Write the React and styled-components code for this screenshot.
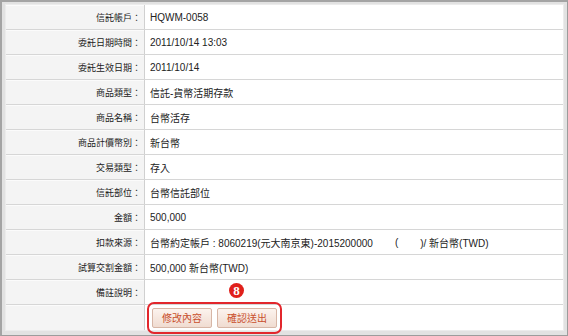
import React from "react";
import styled, { createGlobalStyle } from "styled-components";

const GlobalStyle = createGlobalStyle`
  html, body {
    margin: 0;
    padding: 0;
    background: #ffffff;
  }
  body {
    font-family: "Liberation Sans", Arial, "Noto Sans CJK TC", sans-serif;
  }
`;

const rows = [
  { label: "信託帳戶：", value: "HQWM-0058" },
  { label: "委託日期時間：", value: "2011/10/14 13:03" },
  { label: "委託生效日期：", value: "2011/10/14" },
  { label: "商品類型：", value: "信託-貨幣活期存款" },
  { label: "商品名稱：", value: "台幣活存" },
  { label: "商品計價幣別：", value: "新台幣" },
  { label: "交易類型：", value: "存入" },
  { label: "信託部位：", value: "台幣信託部位" },
  { label: "金額：", value: "500,000" },
  { label: "扣款來源：", value: "source" },
  { label: "試算交割金額：", value: "500,000 新台幣(TWD)" },
  { label: "備註說明：", value: "" },
];

const App = () => {
  return (
    <Frame>
      <GlobalStyle />
      <Table>
        {rows.map((r) => (
          <Row key={r.label}>
            <Label>{r.label}</Label>
            <Value>
              {r.value === "source" ? (
                <>
                  台幣約定帳戶 : 8060219(元大南京東)-2015200000
                  <Gap $w={22} />(<Gap $w={22} />)/ 新台幣(TWD)
                </>
              ) : (
                r.value
              )}
            </Value>
          </Row>
        ))}
        <Row>
          <Label />
          <ActionCell>
            <Badge>8</Badge>
            <Highlight />
            <Button>修改內容</Button>
            <Button>確認送出</Button>
          </ActionCell>
        </Row>
      </Table>
    </Frame>
  );
};

const Frame = styled.div`
  width: 568px;
  height: 336px;
  box-sizing: border-box;
  background: #e2e2e2;
  border: 1px solid #9c9c9c;
  border-left: 2px solid #a4a4a4;
  border-top: 2px solid #a4a4a4;
  padding: 3px 4px 5px 4px;
`;

const Table = styled.div`
  display: flex;
  flex-direction: column;
  height: 325px;
  background: #ffffff;
  box-shadow: 0 0 0 1px #ececec;
`;

const Row = styled.div`
  display: grid;
  grid-template-columns: 139px 1fr;
  height: 25px;
  box-sizing: border-box;
  border-bottom: 1px solid #d6d6d6;
  &:last-child {
    border-bottom: none;
  }
`;

const Label = styled.div`
  display: flex;
  align-items: center;
  justify-content: flex-end;
  background: #f4f4f4;
  border-right: 1px solid #d0d0d0;
  box-shadow: inset 0 1px 0 #fbfbfb;
  padding-right: 3px;
  font-family: "Noto Sans CJK TC", "Liberation Sans", sans-serif;
  font-size: 9px;
  color: #222222;
`;

const Value = styled.div`
  display: flex;
  align-items: center;
  padding-left: 5px;
  font-size: 10px;
  color: #222222;
  white-space: nowrap;
  font-family: "Liberation Sans", Arial, "Noto Sans CJK TC", sans-serif;
`;

const Gap = styled.span`
  display: inline-block;
  width: ${(p) => p.$w}px;
`;

const ActionCell = styled.div`
  position: relative;
  display: flex;
  align-items: center;
  gap: 5px;
  padding-left: 7px;
`;

const Button = styled.button`
  height: 20px;
  padding: 0 9px;
  border: 1px solid #d7b6a6;
  border-radius: 2px;
  background: linear-gradient(#fcf3ee, #f0dcd1);
  color: #c94f2c;
  font-family: "Noto Sans CJK TC", "Liberation Sans", sans-serif;
  font-size: 10px;
  line-height: 18px;
  cursor: pointer;
`;

const Highlight = styled.div`
  position: absolute;
  left: 2px;
  top: -3px;
  width: 135px;
  height: 32px;
  box-sizing: border-box;
  border: 2px solid #e2262c;
  border-radius: 7px;
  pointer-events: none;
`;

const Badge = styled.div`
  position: absolute;
  left: 84px;
  top: -22px;
  width: 15px;
  height: 15px;
  border-radius: 50%;
  background: #e0201b;
  color: #ffffff;
  font-family: "Liberation Serif", "Times New Roman", serif;
  font-weight: bold;
  font-size: 13px;
  line-height: 15px;
  text-align: center;
`;

export default App;
